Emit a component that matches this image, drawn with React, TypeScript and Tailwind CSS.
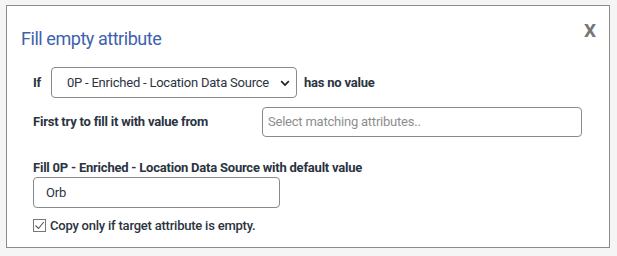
import React from "react";

export default function App() {
  return (
    <div className="w-[617px] h-[256px] bg-[#f4f5f4] pt-[5px] pl-[6px]" style={{ fontFamily: "Roboto, sans-serif" }}>
      <div className="relative w-[604px] h-[243px] bg-white border border-[#8c8c8c] text-[#2b3441]">
        <div className="absolute right-[13px] top-[15px] text-[19px] font-bold text-[#777] leading-none">X</div>
        <div className="pl-[14px] pt-[22px] text-[18px] leading-[22px] tracking-[-0.45px] text-[#3d62ad]">Fill empty attribute</div>
        <div className="pl-[26px] pt-[17px] text-[13px] tracking-[-0.22px]">
          <div className="flex items-center h-[31px]">
            <span className="w-[18px] font-bold">If</span>
            <div className="relative w-[246px] h-[31px] border border-[#8a8a8a] rounded-[4px] flex items-center pl-[15px] text-[#2b3441]">
              0P - Enriched - Location Data Source
              <svg className="absolute right-[6px] top-[12px]" width="10" height="7" viewBox="0 0 10 7">
                <path d="M1.2 1.2 L5 5 L8.8 1.2" fill="none" stroke="#222" strokeWidth="1.7" />
              </svg>
            </div>
            <span className="ml-[7px] font-bold">has no value</span>
          </div>
          <div className="flex items-center mt-[9px] h-[30px]">
            <span className="w-[229px] font-bold">First try to fill it with value from</span>
            <div className="w-[320px] h-[30px] border border-[#8a8a8a] rounded-[4px] flex items-center pl-[5px] text-[#8e8e8e]">
              Select matching attributes..
            </div>
          </div>
          <div className="mt-[23px] font-bold leading-[16px]">
            Fill 0P - Enriched - Location Data Source with default value
          </div>
          <div className="mt-[1px] w-[247px] h-[31px] border border-[#8a8a8a] rounded-[4px] flex items-center pl-[12px]">
            Orb
          </div>
          <div className="flex items-center mt-[8px] gap-[4px]">
            <div className="w-[13px] h-[13px] border border-[#777] flex items-center justify-center bg-white">
              <svg width="11" height="11" viewBox="0 0 11 11">
                <path d="M1.5 5.5 L4.5 8.5 L9.8 2" fill="none" stroke="#555" strokeWidth="1.1" />
              </svg>
            </div>
            <span className="font-medium">Copy only if target attribute is empty.</span>
          </div>
        </div>
      </div>
    </div>
  );
}
